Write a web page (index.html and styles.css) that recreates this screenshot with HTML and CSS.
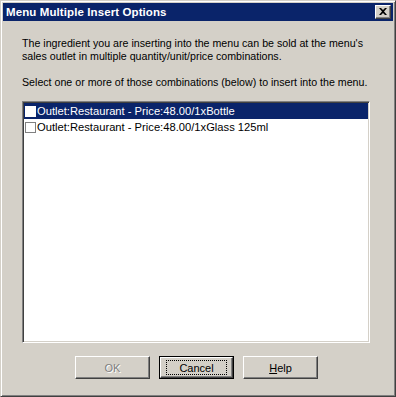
FILE: index.html
```html
<!DOCTYPE html>
<html>
<head>
<meta charset="utf-8">
<link rel="stylesheet" href="styles.css">
</head>
<body>
<div class="window">
  <div class="titlebar">
    <span class="title">Menu Multiple Insert Options</span>
    <span class="close-btn">
      <svg width="8" height="7" viewBox="0 0 8 7"><path d="M0 0h2l2 2 2-2h2L5 3.5 8 7H6L4 5 2 7H0l3-3.5z" fill="#000"/></svg>
    </span>
  </div>
  <div class="content">
    <p class="para">The ingredient you are inserting into the menu can be sold at the menu's sales outlet in multiple quantity/unit/price combinations.</p>
    <p class="para">Select one or more of those combinations (below) to insert into the menu.</p>
    <div class="listbox">
      <div class="row selected"><span class="check"></span><span class="label">Outlet:Restaurant - Price:48.00/1xBottle</span></div>
      <div class="row"><span class="check"></span><span class="label">Outlet:Restaurant - Price:48.00/1xGlass 125ml</span></div>
    </div>
    <div class="buttons">
      <div class="btn disabled"><span class="btn-face">OK</span></div>
      <div class="btn default"><span class="btn-face"><span class="focus">Cancel</span></span></div>
      <div class="btn"><span class="btn-face"><span><u>H</u>elp</span></span></div>
    </div>
  </div>
</div>
</body>
</html>
```
FILE: styles.css
```css
html, body {
  margin: 0;
  padding: 0;
  background: #d4d0c8;
}
.window {
  width: 396px;
  height: 397px;
  box-sizing: border-box;
  background: #d4d0c8;
  border-top: 1px solid #d4d0c8;
  border-left: 1px solid #d4d0c8;
  border-right: 1px solid #404040;
  border-bottom: 1px solid #404040;
  box-shadow: inset 1px 1px 0 #ffffff, inset -1px -1px 0 #808080;
  padding: 2px;
  display: flex;
  flex-direction: column;
  font-family: "Liberation Sans", Arial, sans-serif;
  font-size: 11px;
  color: #000;
}
.titlebar {
  height: 18px;
  background: #0a246a;
  display: flex;
  align-items: center;
  justify-content: space-between;
  padding: 0 2px 0 3px;
}
.title {
  color: #fff;
  font-weight: bold;
  font-size: 11.5px;
  font-family: "Liberation Sans", Arial, sans-serif;
  letter-spacing: 0.1px;
}
.close-btn {
  width: 16px;
  height: 14px;
  box-sizing: border-box;
  background: #d4d0c8;
  border-top: 1px solid #fff;
  border-left: 1px solid #fff;
  border-right: 1px solid #404040;
  border-bottom: 1px solid #404040;
  box-shadow: inset -1px -1px 0 #808080;
  display: flex;
  align-items: center;
  justify-content: center;
  padding: 0 1px 1px 0;
}
.close-btn svg { display: block; }
.content {
  flex: 1;
  padding: 16px 0 0 19px;
  display: flex;
  flex-direction: column;
}
.para {
  margin: 0 0 13px 0;
  line-height: 13px;
  width: 355px;
  font-size: 10.65px;
}
.para + .para { margin-bottom: 12px; }
.listbox {
  width: 348px;
  height: 242px;
  box-sizing: border-box;
  background: #fff;
  border-top: 1px solid #808080;
  border-left: 1px solid #808080;
  border-right: 1px solid #fff;
  border-bottom: 1px solid #fff;
  box-shadow: inset 1px 1px 0 #404040, inset -1px -1px 0 #d4d0c8;
  padding: 1px;
}
.row {
  height: 16px;
  display: flex;
  align-items: center;
  font-size: 11.2px;
}
.row.selected {
  background: #0a246a;
  color: #fff;
}
.check {
  width: 11px;
  height: 11px;
  box-sizing: border-box;
  background: #fff;
  border: 1px solid #808080;
  margin: 0 1px 0 1px;
  flex: none;
}
.row.selected .check { border-color: #fff; }
.buttons {
  margin-top: 13px;
  display: flex;
  gap: 9px;
  padding-left: 53px;
}
.btn {
  width: 75px;
  height: 23px;
  box-sizing: border-box;
  border-top: 1px solid #fff;
  border-left: 1px solid #fff;
  border-right: 1px solid #404040;
  border-bottom: 1px solid #404040;
  box-shadow: inset -1px -1px 0 #808080;
  display: flex;
}
.btn.default {
  border: 1px solid #000;
  box-shadow: none;
}
.btn-face {
  flex: 1;
  display: flex;
  align-items: center;
  justify-content: center;
  font-size: 11px;
}
.btn.default .btn-face {
  border-top: 1px solid #fff;
  border-left: 1px solid #fff;
  border-right: 1px solid #404040;
  border-bottom: 1px solid #404040;
  box-shadow: inset -1px -1px 0 #808080;
}
.focus {
  width: 61px;
  height: 15px;
  box-sizing: border-box;
  border: 1px dotted #000;
  display: flex;
  align-items: center;
  justify-content: center;
}
.btn.disabled .btn-face {
  color: #808080;
  text-shadow: 1px 1px 0 #fff;
}
```
